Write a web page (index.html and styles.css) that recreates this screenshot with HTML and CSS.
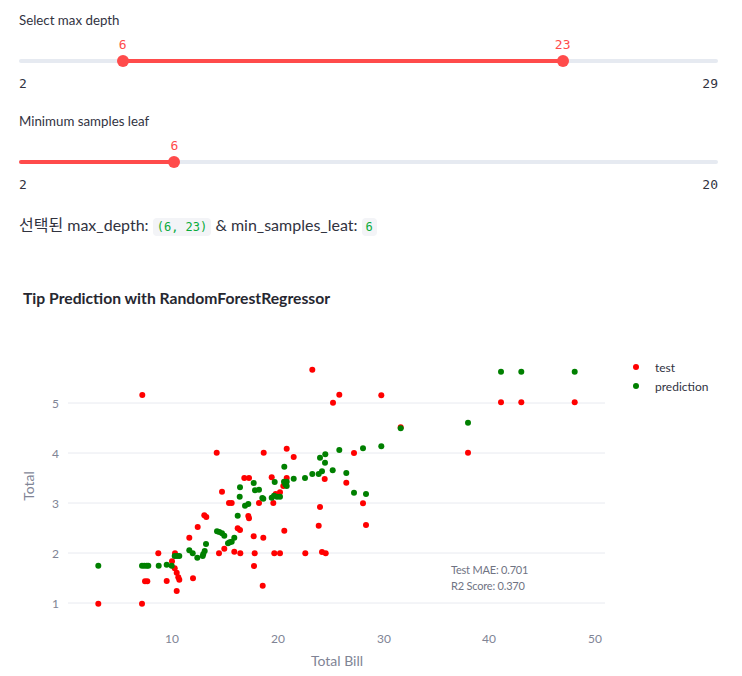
FILE: index.html
```html
<!DOCTYPE html>
<html lang="ko">
<head>
<meta charset="utf-8">
<title>Tip Prediction</title>
<link rel="stylesheet" href="styles.css">
</head>
<body>
<main class="page">
  <section class="widget">
    <div class="label">Select max depth</div>
    <div class="slider">
      <div class="track">
        <div class="fill" style="left:14.815%;width:62.963%"></div>
        <div class="thumb" style="left:14.815%"><span class="val">6</span></div>
        <div class="thumb" style="left:77.778%"><span class="val">23</span></div>
      </div>
    </div>
    <div class="minmax"><span>2</span><span>29</span></div>
  </section>
  <section class="widget second">
    <div class="label">Minimum samples leaf</div>
    <div class="slider">
      <div class="track">
        <div class="fill" style="left:0;width:22.222%"></div>
        <div class="thumb" style="left:22.222%"><span class="val">6</span></div>
      </div>
    </div>
    <div class="minmax"><span>2</span><span>20</span></div>
  </section>
  <p class="summary">선택된 max_depth: <code class="code">(6, 23)</code> &amp; min_samples_leat: <code class="code">6</code></p>
</main>
<svg class="chart" width="742" height="416" viewBox="0 260 742 416" xmlns="http://www.w3.org/2000/svg">
  <text class="title" x="23" y="304">Tip Prediction with RandomForestRegressor</text>
  <g class="grid">
    <line x1="68" x2="605" y1="403" y2="403"/>
    <line x1="68" x2="605" y1="453" y2="453"/>
    <line x1="68" x2="605" y1="503" y2="503"/>
    <line x1="68" x2="605" y1="553" y2="553"/>
    <line x1="68" x2="605" y1="603" y2="603"/>
  </g>
  <g class="tick ytick">
    <text x="59" y="408">5</text>
    <text x="59" y="458">4</text>
    <text x="59" y="508">3</text>
    <text x="59" y="558">2</text>
    <text x="59" y="608">1</text>
  </g>
  <g class="tick xtick">
    <text x="172" y="643">10</text>
    <text x="278" y="643">20</text>
    <text x="384" y="643">30</text>
    <text x="489" y="643">40</text>
    <text x="595" y="643">50</text>
  </g>
  <text class="axis-title" x="337" y="666">Total Bill</text>
  <text class="axis-title" x="34" y="486" transform="rotate(-90 34 486)">Total</text>
  <g class="red">
    <circle cx="142.3" cy="395" r="3"/><circle cx="216.7" cy="452.7" r="3"/><circle cx="222" cy="491.7" r="3"/>
    <circle cx="229" cy="503" r="3"/><circle cx="204.3" cy="515.3" r="3"/><circle cx="206.3" cy="517" r="3"/>
    <circle cx="197.7" cy="527" r="3"/><circle cx="189.3" cy="537.7" r="3"/><circle cx="158.3" cy="553.3" r="3"/>
    <circle cx="175" cy="553.3" r="3"/><circle cx="219" cy="553.3" r="3"/><circle cx="224.3" cy="548.7" r="3"/>
    <circle cx="172" cy="561.3" r="3"/><circle cx="174.7" cy="568.3" r="3"/><circle cx="176.7" cy="572.7" r="3"/>
    <circle cx="178.3" cy="577.3" r="3"/><circle cx="179.3" cy="579.7" r="3"/><circle cx="145" cy="581.3" r="3"/>
    <circle cx="147.3" cy="581.3" r="3"/><circle cx="166.7" cy="581" r="3"/><circle cx="193" cy="578.3" r="3"/>
    <circle cx="176.7" cy="591" r="3"/><circle cx="98.3" cy="603.7" r="3"/><circle cx="142" cy="603.7" r="3"/>
    <circle cx="312.3" cy="369.7" r="3"/><circle cx="333" cy="402.7" r="3"/><circle cx="339.3" cy="394.7" r="3"/>
    <circle cx="381.3" cy="395.3" r="3"/><circle cx="263.7" cy="452.7" r="3"/><circle cx="286.7" cy="448.7" r="3"/>
    <circle cx="293.7" cy="457" r="3"/><circle cx="354" cy="453" r="3"/><circle cx="324.7" cy="479" r="3"/>
    <circle cx="346.3" cy="482.7" r="3"/><circle cx="286.7" cy="478" r="3"/><circle cx="271.7" cy="477.3" r="3"/>
    <circle cx="244.3" cy="478" r="3"/><circle cx="249" cy="478" r="3"/><circle cx="283.3" cy="486" r="3"/>
    <circle cx="280" cy="492.3" r="3"/><circle cx="275.7" cy="494" r="3"/><circle cx="231.7" cy="503" r="3"/>
    <circle cx="259" cy="503" r="3"/><circle cx="273.3" cy="503" r="3"/><circle cx="363" cy="503.3" r="3"/>
    <circle cx="320" cy="507" r="3"/><circle cx="248.3" cy="516" r="3"/><circle cx="249" cy="518.3" r="3"/>
    <circle cx="318.7" cy="525.7" r="3"/><circle cx="366" cy="525" r="3"/><circle cx="237.7" cy="528.3" r="3"/>
    <circle cx="240" cy="530" r="3"/><circle cx="284.3" cy="530.7" r="3"/><circle cx="253.7" cy="536.3" r="3"/>
    <circle cx="263.3" cy="537.7" r="3"/><circle cx="234.3" cy="551.7" r="3"/><circle cx="240.3" cy="553.3" r="3"/>
    <circle cx="254.7" cy="553.3" r="3"/><circle cx="274.3" cy="553.3" r="3"/><circle cx="280" cy="553.3" r="3"/>
    <circle cx="305.3" cy="553.3" r="3"/><circle cx="322" cy="552" r="3"/><circle cx="325.7" cy="553.3" r="3"/>
    <circle cx="254" cy="566" r="3"/><circle cx="262.7" cy="585.7" r="3"/>
    <circle cx="501" cy="402.3" r="3"/><circle cx="521.3" cy="402.3" r="3"/><circle cx="574.7" cy="402.3" r="3"/>
    <circle cx="400.7" cy="427.3" r="3"/><circle cx="468" cy="452.7" r="3"/>
  </g>
  <g class="green">
    <circle cx="217" cy="531.3" r="3"/><circle cx="219.3" cy="532" r="3"/><circle cx="222" cy="533.3" r="3"/>
    <circle cx="224.3" cy="535.7" r="3"/><circle cx="229.7" cy="542.3" r="3"/><circle cx="228" cy="543.3" r="3"/>
    <circle cx="206" cy="544" r="3"/><circle cx="189.3" cy="550.3" r="3"/><circle cx="192.7" cy="553.3" r="3"/>
    <circle cx="204.7" cy="551" r="3"/><circle cx="203.3" cy="554" r="3"/><circle cx="202.7" cy="556" r="3"/>
    <circle cx="197.3" cy="557.7" r="3"/><circle cx="174.7" cy="556" r="3"/><circle cx="177" cy="556" r="3"/>
    <circle cx="179.3" cy="556" r="3"/><circle cx="98.3" cy="565.7" r="3"/><circle cx="142" cy="565.7" r="3"/>
    <circle cx="144.3" cy="565.7" r="3"/><circle cx="146.7" cy="565.7" r="3"/><circle cx="148.3" cy="565.7" r="3"/>
    <circle cx="158.7" cy="565.7" r="3"/><circle cx="166.7" cy="564.7" r="3"/><circle cx="171.7" cy="565.7" r="3"/>
    <circle cx="325.3" cy="454.3" r="3"/><circle cx="320" cy="457.7" r="3"/><circle cx="339.3" cy="450" r="3"/>
    <circle cx="363" cy="448.3" r="3"/><circle cx="381.3" cy="446.3" r="3"/><circle cx="325" cy="462.7" r="3"/>
    <circle cx="284.3" cy="466.7" r="3"/><circle cx="332.7" cy="470.3" r="3"/><circle cx="322" cy="471.3" r="3"/>
    <circle cx="318.7" cy="474" r="3"/><circle cx="312.3" cy="474" r="3"/><circle cx="346.3" cy="473" r="3"/>
    <circle cx="305" cy="478" r="3"/><circle cx="293.7" cy="478.7" r="3"/><circle cx="253.7" cy="483" r="3"/>
    <circle cx="274.7" cy="482" r="3"/><circle cx="284" cy="481.7" r="3"/><circle cx="286.7" cy="481.7" r="3"/>
    <circle cx="286.7" cy="486" r="3"/><circle cx="285.3" cy="484.3" r="3"/><circle cx="240" cy="487.3" r="3"/>
    <circle cx="255" cy="490.3" r="3"/><circle cx="259" cy="489.7" r="3"/><circle cx="354" cy="492.7" r="3"/>
    <circle cx="366" cy="494" r="3"/><circle cx="274" cy="495.7" r="3"/><circle cx="277" cy="496.7" r="3"/>
    <circle cx="280" cy="496.7" r="3"/><circle cx="271.7" cy="497.7" r="3"/><circle cx="263.3" cy="498.7" r="3"/>
    <circle cx="262.3" cy="498" r="3"/><circle cx="239.7" cy="496.7" r="3"/><circle cx="248.3" cy="504" r="3"/>
    <circle cx="245" cy="505.7" r="3"/><circle cx="237.7" cy="515.7" r="3"/><circle cx="234.3" cy="537.7" r="3"/>
    <circle cx="231.7" cy="541.7" r="3"/>
    <circle cx="501" cy="371.7" r="3"/><circle cx="521.3" cy="371.7" r="3"/><circle cx="574.7" cy="371.7" r="3"/>
    <circle cx="400.7" cy="428.3" r="3"/><circle cx="468" cy="422.7" r="3"/>
  </g>
  <text class="note" x="451" y="574">Test MAE: 0.701</text>
  <text class="note" x="451" y="590">R2 Score: 0.370</text>
  <g class="legend">
    <circle class="red-dot" cx="636" cy="367" r="3"/>
    <text x="655" y="372">test</text>
    <circle class="green-dot" cx="636" cy="386" r="3"/>
    <text x="655" y="391">prediction</text>
  </g>
</svg>
</body>
</html>
```
FILE: styles.css
```css
* { box-sizing: border-box; }
body {
  margin: 0;
  background: #ffffff;
  color: #31333f;
  font-family: "Source Sans Pro", Lato, "Noto Sans", "Noto Sans CJK KR", sans-serif;
}
.page { padding: 0 24px 0 19px; }
.label {
  padding-top: 10px;
  font-size: 13.3px;
  line-height: 20px;
  color: #31333f;
}
.widget.second { margin-top: 7px; }
.slider { padding-top: 29px; }
.track {
  position: relative;
  height: 4px;
  border-radius: 2px;
  background: #e6eaf1;
}
.fill {
  position: absolute;
  top: 0;
  height: 4px;
  background: #ff4b4b;
  border-radius: 2px;
}
.thumb {
  position: absolute;
  top: -4px;
  width: 12px;
  height: 12px;
  margin-left: -6px;
  border-radius: 50%;
  background: #ff4b4b;
}
.val {
  position: absolute;
  top: -20px;
  left: 50%;
  transform: translateX(-50%);
  font-family: "DejaVu Sans Mono", "Liberation Mono", monospace;
  font-size: 13px;
  line-height: 20px;
  color: #ff4b4b;
  white-space: nowrap;
}
.minmax {
  margin-top: 11px;
  display: flex;
  justify-content: space-between;
  font-family: "DejaVu Sans Mono", "Liberation Mono", monospace;
  font-size: 13px;
  line-height: 20px;
  color: #31333f;
}
.summary {
  margin: 18px 0 0;
  font-size: 16px;
  line-height: 24px;
  color: #31333f;
}
.code {
  font-family: "DejaVu Sans Mono", "Liberation Mono", monospace;
  font-size: 12px;
  color: #09ab3b;
  background: #f3f4f7;
  padding: 2px 4px;
  border-radius: 4px;
}
.chart {
  display: block;
  margin-top: 21px;
  font-family: "Source Sans Pro", Lato, "Noto Sans", sans-serif;
}
.title { font-size: 15.7px; font-weight: 700; fill: #262730; }
.grid line { stroke: #e8eaf0; stroke-width: 1; }
.tick { font-size: 12px; fill: #808495; }
.ytick { text-anchor: end; }
.xtick { text-anchor: middle; }
.axis-title { font-size: 14px; fill: #808495; text-anchor: middle; }
.red circle, .red-dot { fill: #ff0000; }
.green circle, .green-dot { fill: #008000; }
.note { font-size: 11px; letter-spacing: -0.2px; fill: #6f7383; }
.legend text { font-size: 12px; fill: #31333f; }
```
